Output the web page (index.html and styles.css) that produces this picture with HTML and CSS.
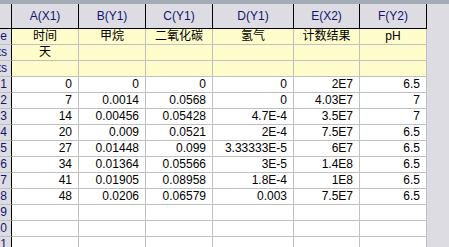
FILE: index.html
```html
<!DOCTYPE html>
<html lang="en">
<head>
    <meta charset="UTF-8">
    <title>Book1 - Sheet1</title>
    <link rel="stylesheet" href="styles.css">
</head>
<body>
    <div class="topBar"></div>
    <div class="sheet headRows">
        <div class="cell corner"></div>
        <div class="cell colHead">A(X1)</div>
        <div class="cell colHead">B(Y1)</div>
        <div class="cell colHead">C(Y1)</div>
        <div class="cell colHead">D(Y1)</div>
        <div class="cell colHead">E(X2)</div>
        <div class="cell colHead">F(Y2)</div>

        <div class="cell rowHead">Long Name</div>
        <div class="cell meta">时间</div>
        <div class="cell meta">甲烷</div>
        <div class="cell meta">二氧化碳</div>
        <div class="cell meta">氢气</div>
        <div class="cell meta">计数结果</div>
        <div class="cell meta">pH</div>

        <div class="cell rowHead">Units</div>
        <div class="cell meta">天</div>
        <div class="cell meta"></div>
        <div class="cell meta"></div>
        <div class="cell meta"></div>
        <div class="cell meta"></div>
        <div class="cell meta"></div>

        <div class="cell rowHead">Comments</div>
        <div class="cell meta"></div>
        <div class="cell meta"></div>
        <div class="cell meta"></div>
        <div class="cell meta"></div>
        <div class="cell meta"></div>
        <div class="cell meta"></div>
    </div>
    <div class="sheet" id="dataRows"></div>

    <script>
        let rows = [
            ["0", "0", "0", "0", "2E7", "6.5"],
            ["7", "0.0014", "0.0568", "0", "4.03E7", "7"],
            ["14", "0.00456", "0.05428", "4.7E-4", "3.5E7", "7"],
            ["20", "0.009", "0.0521", "2E-4", "7.5E7", "6.5"],
            ["27", "0.01448", "0.099", "3.33333E-5", "6E7", "6.5"],
            ["34", "0.01364", "0.05566", "3E-5", "1.4E8", "6.5"],
            ["41", "0.01905", "0.08958", "1.8E-4", "1E8", "6.5"],
            ["48", "0.0206", "0.06579", "0.003", "7.5E7", "6.5"],
            ["", "", "", "", "", ""],
            ["", "", "", "", "", ""],
            ["", "", "", "", "", ""]
        ];

        const dataDiv = document.getElementById("dataRows");
        rows.forEach((row, i) => {
            let html = `<div class="cell rowHead">${i + 1}</div>`;
            row.forEach(value => {
                html += `<div class="cell data">${value}</div>`;
            });
            dataDiv.innerHTML += html;
        });
    </script>
</body>
</html>
```

FILE: styles.css
```css
* {
    box-sizing: border-box;
}
body {
    margin: 0;
    background-color: #dcdce2;
    font-family: "Liberation Sans", Arial, "Noto Sans CJK SC", sans-serif;
    font-size: 12px;
    overflow: hidden;
}
.topBar {
    height: 4px;
    background-color: #a3abb4;
}
.sheet {
    display: grid;
    grid-template-columns: 12px 67px 67px 67px 81px 66px 67px;
    grid-auto-rows: 16px;
    width: 427px;
}
.headRows {
    grid-template-rows: 25px 16px 16px 16px;
}
.cell {
    border-right: 1px solid #c0c0c0;
    border-bottom: 1px solid #c0c0c0;
    overflow: hidden;
    white-space: nowrap;
    line-height: 15px;
}
.corner, .colHead {
    line-height: 24px;
    background-color: #dcdce2;
    border-right: 1px solid #000;
    border-bottom: 1px solid #000;
}
.colHead {
    text-align: center;
    color: #14146e;
}
.rowHead {
    background-color: #dcdce2;
    border-right: 1px solid #000;
    color: #14146e;
    padding-right: 4px;
    display: flex;
    justify-content: flex-end;
}
.meta {
    background-color: #fffccc;
    text-align: center;
    color: #000;
}
.data {
    background-color: #fff;
    text-align: right;
    padding-right: 6px;
    color: #000;
}
```
